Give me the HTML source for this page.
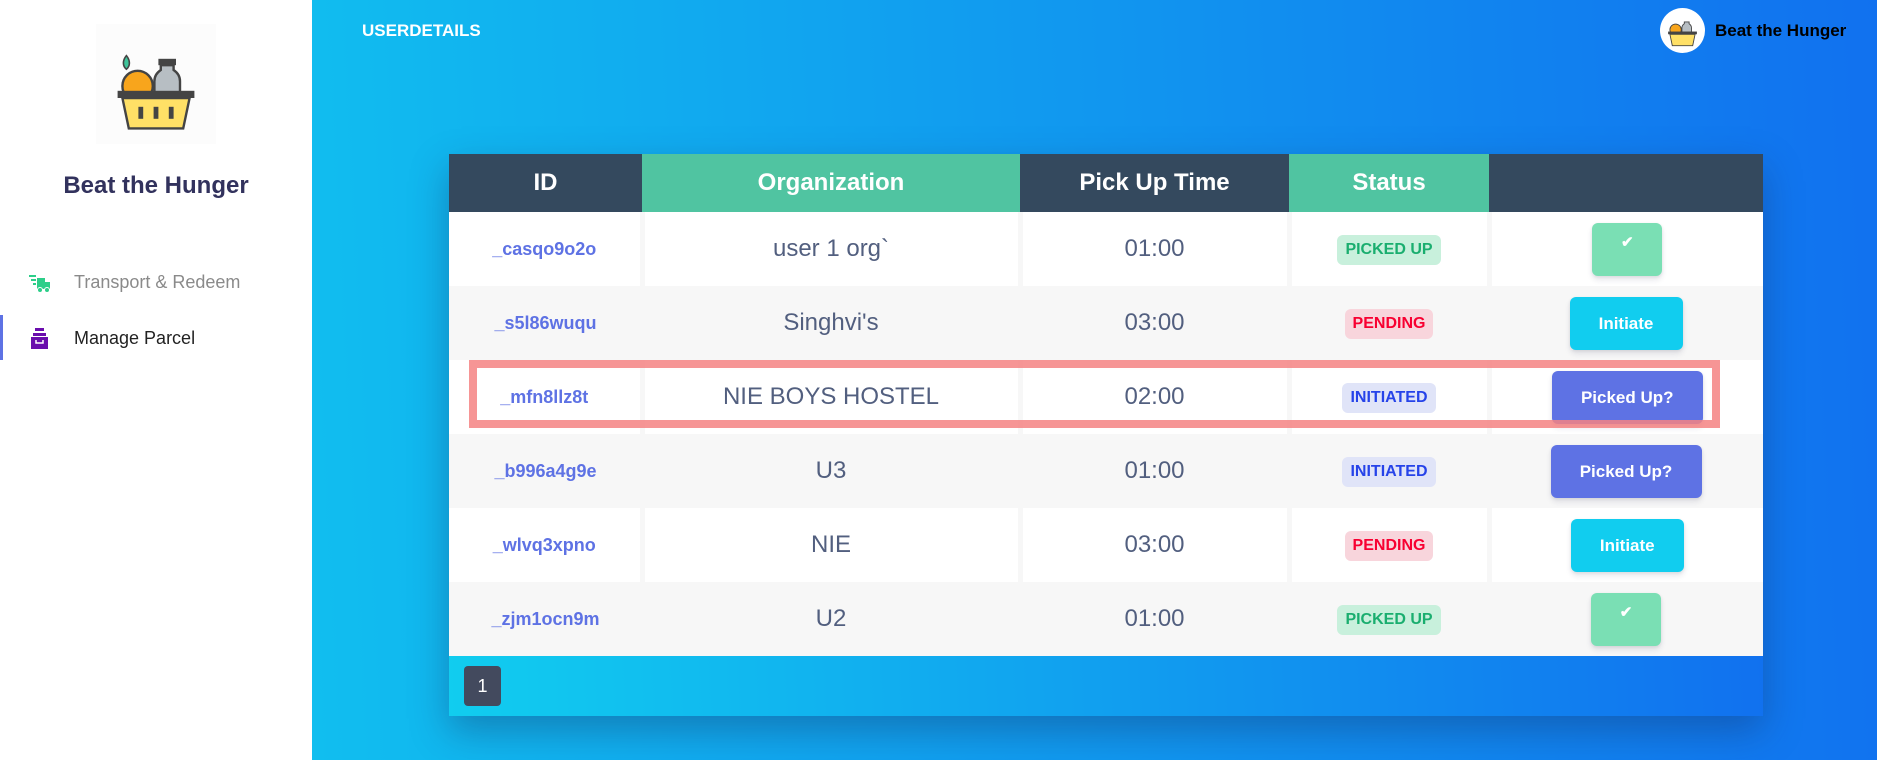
<!DOCTYPE html>
<html><head><meta charset="utf-8"><style>
*{box-sizing:border-box;margin:0;padding:0}
body{width:1877px;height:760px;overflow:hidden;font-family:"Liberation Sans",Arial,sans-serif;background:linear-gradient(87deg,#11cdef 0%,#1171ef 100%);position:relative}
.side{position:absolute;left:0;top:0;width:312px;height:760px;background:#fff}
.logo{position:absolute;left:96px;top:24px;width:120px;height:120px;background:#fcfcfc}
.brand{position:absolute;left:0;width:312px;top:172px;text-align:center;font-size:24px;font-weight:bold;color:#32325d}
.nav{position:absolute;left:74px;font-size:18px}
.bar{position:absolute;left:0;top:315px;width:3px;height:45px;background:#5e72e4}
.ud{position:absolute;left:362px;top:21px;color:#fff;font-weight:bold;font-size:17px}
.av{position:absolute;left:1660px;top:8px;width:45px;height:45px;border-radius:50%;background:#fff}
.tn{position:absolute;left:1715px;top:21px;font-weight:bold;font-size:17px;color:#000}
.card{position:absolute;left:449px;top:154px;width:1314px;height:562px;box-shadow:0 15px 35px rgba(20,40,90,.35)}
table{border-collapse:collapse;width:1314px;table-layout:fixed}
th{height:58px;color:#fff;font-size:24px;font-weight:bold}
th.d{background:#34495e}th.g{background:#50c4a1}
td{height:74px;text-align:center;color:#525f7f;font-size:24px}
tr.w td{background:#fff;border-right:5px solid #f7f7f7}
tr.w td:last-child{border-right:0}
tr.s td{background:#f7f7f7}
.id{color:#5e72e4;font-size:18px;font-weight:bold}
.b{display:inline-block;font-size:16px;font-weight:bold;padding:6px 8px;border-radius:6px}
.pu{background:#c8f0dc;color:#1aae6f}.pe{background:#f8d5dc;color:#f80031}.in{background:#e0e4f8;color:#2643e9}
.btn{display:inline-block;color:#fff;font-weight:bold;font-size:17px;border-radius:6px;height:53px;line-height:53px;box-shadow:0 4px 6px rgba(50,50,93,.11),0 1px 3px rgba(0,0,0,.08)}
.ok{background:#7adfb4;width:70px;line-height:40px;font-size:15px}.it{background:#11cdef;width:113px}.pk{background:#5e72e4;width:151px}
.foot{height:60px;background:linear-gradient(87deg,#11cdef 0%,#1171ef 100%);position:relative}
.pg{position:absolute;left:15px;top:10px;width:37px;height:40px;background:#434a5e;color:#fff;border-radius:4px;text-align:center;line-height:40px;font-size:18px}
.hl{position:absolute;left:469px;top:360px;width:1251px;height:68px;border:8px solid rgba(245,130,130,.85)}
</style></head><body>
<div class="side">
 <div class="logo"><svg width="120" height="120" viewBox="0 0 120 120"><g transform="translate(12 14) scale(.8)">
  <path d="M23 22c-5 6-5 13 0 17 5-4 5-11 0-17z" fill="#3fc49a" stroke="#444" stroke-width="2"/>
  <circle cx="37" cy="60" r="19" fill="#f8a51c" stroke="#444" stroke-width="3"/>
  <rect x="63" y="26" width="22" height="8" fill="#444"/>
  <path d="M66 34h16v6c6 4 8 9 8 14v14H58V54c0-5 2-10 8-14z" fill="#b7bec3" stroke="#444" stroke-width="3"/>
  <rect x="12" y="66" width="96" height="9" fill="#444"/>
  <path d="M18 75h84l-8 38H26z" fill="#ffe066" stroke="#444" stroke-width="3"/>
  <rect x="38" y="86" width="6" height="15" fill="#444"/><rect x="57" y="86" width="6" height="15" fill="#444"/><rect x="76" y="86" width="6" height="15" fill="#444"/>
 </g></svg></div>
 <div class="brand">Beat the Hunger</div>
 <svg style="position:absolute;left:29px;top:274px" width="22" height="20" viewBox="0 0 22 20"><path d="M0 2h7M2 6h5M4 10h3" stroke="#2dce89" stroke-width="2"/><rect x="8" y="4" width="8" height="11" fill="#2dce89"/><rect x="16" y="8" width="5" height="7" fill="#2dce89"/><circle cx="11" cy="16" r="2.5" fill="#2dce89" stroke="#fff"/><circle cx="18" cy="16" r="2.5" fill="#2dce89" stroke="#fff"/></svg>
 <div class="nav" style="top:272px;color:#8a8a8a">Transport &amp; Redeem</div>
 <div class="bar"></div>
 <svg style="position:absolute;left:31px;top:328px" width="17" height="21" viewBox="0 0 17 21"><rect x="4" y="0" width="9" height="3" fill="#6a0dad"/><rect x="2" y="5" width="13" height="3" fill="#6a0dad"/><rect x="0" y="9" width="17" height="12" fill="#6a0dad"/><path d="M5 12v3h7v-3" stroke="#fff" stroke-width="1.5" fill="none"/></svg>
 <div class="nav" style="top:328px;color:#222">Manage Parcel</div>
</div>
<div class="ud">USERDETAILS</div>
<div class="av"><svg width="45" height="45" viewBox="0 0 120 120"><g transform="translate(12 10) scale(.8)"><circle cx="37" cy="60" r="19" fill="#f8a51c" stroke="#444" stroke-width="3"/><path d="M66 34h16v6c6 4 8 9 8 14v14H58V54c0-5 2-10 8-14z" fill="#b7bec3" stroke="#444" stroke-width="3"/><rect x="12" y="66" width="96" height="9" fill="#444"/><path d="M18 75h84l-8 38H26z" fill="#ffe066" stroke="#444" stroke-width="3"/></g></svg></div>
<div class="tn">Beat the Hunger</div>
<div class="card">
<table>
<colgroup><col style="width:193px"><col style="width:378px"><col style="width:269px"><col style="width:200px"><col style="width:274px"></colgroup>
<tr><th class="d">ID</th><th class="g">Organization</th><th class="d">Pick Up Time</th><th class="g">Status</th><th class="d"></th></tr>
<tr class="w"><td class="id">_casqo9o2o</td><td>user 1 org`</td><td>01:00</td><td><span class="b pu">PICKED UP</span></td><td><span class="btn ok">✔</span></td></tr>
<tr class="s"><td class="id">_s5l86wuqu</td><td>Singhvi's</td><td>03:00</td><td><span class="b pe">PENDING</span></td><td><span class="btn it">Initiate</span></td></tr>
<tr class="w"><td class="id">_mfn8llz8t</td><td>NIE BOYS HOSTEL</td><td>02:00</td><td><span class="b in">INITIATED</span></td><td><span class="btn pk">Picked Up?</span></td></tr>
<tr class="s"><td class="id">_b996a4g9e</td><td>U3</td><td>01:00</td><td><span class="b in">INITIATED</span></td><td><span class="btn pk">Picked Up?</span></td></tr>
<tr class="w"><td class="id">_wlvq3xpno</td><td>NIE</td><td>03:00</td><td><span class="b pe">PENDING</span></td><td><span class="btn it">Initiate</span></td></tr>
<tr class="s"><td class="id">_zjm1ocn9m</td><td>U2</td><td>01:00</td><td><span class="b pu">PICKED UP</span></td><td><span class="btn ok">✔</span></td></tr>
</table>
<div class="foot"><div class="pg">1</div></div>
</div>
<div class="hl"></div>
</body></html>
